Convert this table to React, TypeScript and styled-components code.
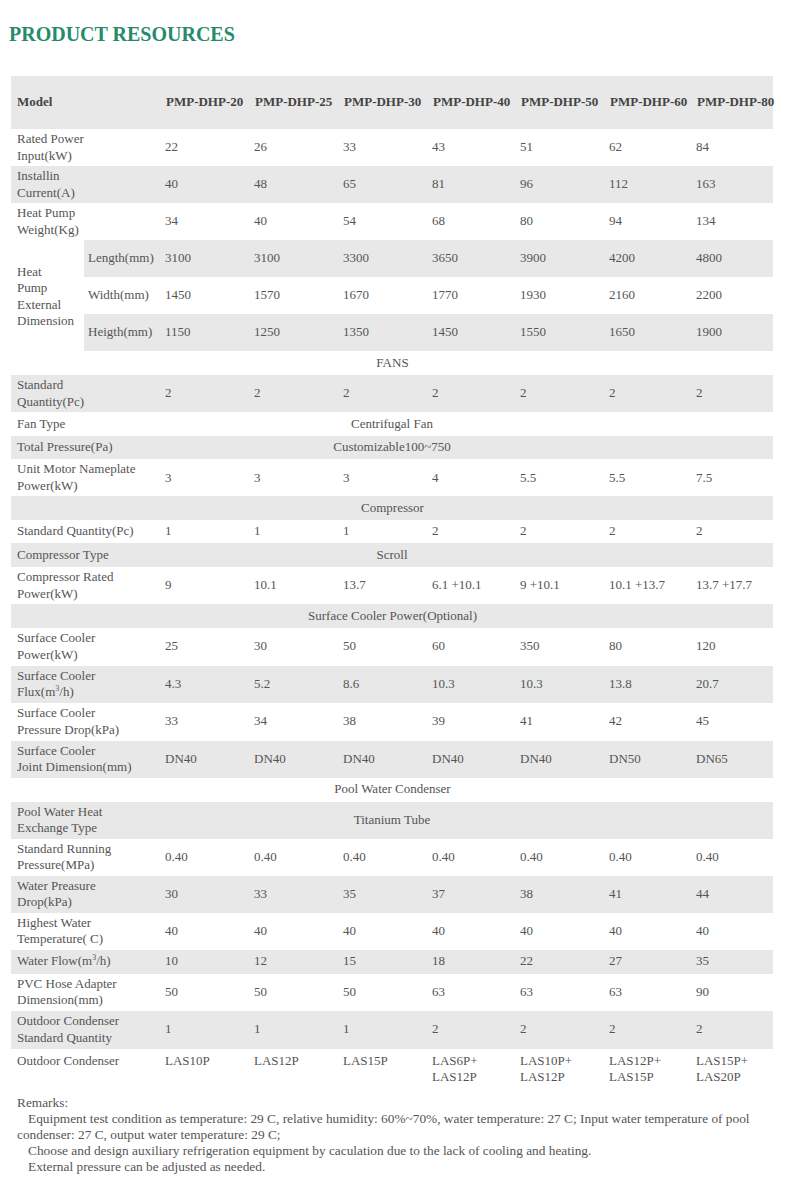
import React, { ReactNode } from 'react';
import styled, { createGlobalStyle } from 'styled-components';

const COLS = '73px 76px 89px 89px 89px 88px 89px 87px 82px';
const TALL = 37;
const SHORT = 23.4;

const GlobalStyle = createGlobalStyle`
  html, body {
    margin: 0;
    padding: 0;
    background: #ffffff;
  }
  body {
    font-family: "Liberation Serif", "Times New Roman", serif;
    color: #555555;
  }
`;

const Page = styled.div`
  width: 790px;
  padding: 23px 0 30px;
`;

const Title = styled.h2`
  margin: 0 0 30px 9px;
  font-size: 20px;
  line-height: 23px;
  font-weight: bold;
  color: #268b6c;
`;

const Table = styled.div`
  margin-left: 11px;
  width: 762px;
  display: grid;
  grid-template-columns: ${COLS};
  font-size: 13px;
  line-height: 16.5px;
  color: #555555;
`;

const Text = styled.span`
  white-space: pre-line;
`;

const HeadText = styled.span`
  white-space: nowrap;
`;

const Sup = styled.sup`
  font-size: 8px;
  line-height: 0;
  vertical-align: 5px;
`;

const Cell = styled.div<{ $shade?: boolean; $h?: number; $top?: boolean; $wide?: boolean }>`
  box-sizing: border-box;
  display: flex;
  align-items: ${p => (p.$top ? 'flex-start' : 'center')};
  min-height: ${p => p.$h ?? SHORT}px;
  padding: ${p => (p.$top ? '4px 4px 2px 5px' : '2px 4px 2px 5px')};
  background: ${p => (p.$shade ? '#e8e8e8' : 'transparent')};
  grid-column: ${p => (p.$wide ? '1 / 3' : 'auto')};
`;

const LabelCell = styled(Cell)`
  padding-left: 6px;
`;

const HeadCell = styled(Cell)`
  font-weight: bold;
  color: #444444;
  padding-left: 6px;
  padding-right: 0;
`;

const SubLabel = styled(Cell)`
  grid-column: 2;
  padding-left: 4px;
`;

const DimLabel = styled.div`
  grid-column: 1;
  grid-row: span 3;
  display: flex;
  align-items: center;
  padding: 2px 4px 0 6px;
`;

const SectionCell = styled(Cell)`
  grid-column: 1 / -1;
  justify-content: center;
`;

const SpanValue = styled(Cell)`
  grid-column: 3 / -1;
  justify-content: center;
  padding-right: 154px;
`;

const Remarks = styled.div`
  margin: 6px 0 0 17px;
  width: 760px;
  font-size: 13.33px;
  line-height: 16px;
  color: #555555;
`;

const RemarkTitle = styled.div``;

const Note = styled.p`
  margin: 0;
  text-indent: 11px;
`;

type DataRow = {
  kind: 'data';
  label: ReactNode;
  values: ReactNode[];
  shade: boolean;
  h?: number;
  top?: boolean;
};
type SpanRow = { kind: 'span'; label: ReactNode; value: string; shade: boolean; h?: number };
type SectionRow = { kind: 'section'; title: string; shade: boolean; h?: number };
type Row = DataRow | SpanRow | SectionRow;

const models = ['PMP-DHP-20', 'PMP-DHP-25', 'PMP-DHP-30', 'PMP-DHP-40', 'PMP-DHP-50', 'PMP-DHP-60', 'PMP-DHP-80'];

const topRows: DataRow[] = [
  { kind: 'data', label: 'Rated Power\nInput(kW)', values: ['22', '26', '33', '43', '51', '62', '84'], shade: false, h: TALL },
  { kind: 'data', label: 'Installin\nCurrent(A)', values: ['40', '48', '65', '81', '96', '112', '163'], shade: true, h: TALL },
  { kind: 'data', label: 'Heat Pump\nWeight(Kg)', values: ['34', '40', '54', '68', '80', '94', '134'], shade: false, h: TALL },
];

const dimRows: DataRow[] = [
  { kind: 'data', label: 'Length(mm)', values: ['3100', '3100', '3300', '3650', '3900', '4200', '4800'], shade: true, h: TALL },
  { kind: 'data', label: 'Width(mm)', values: ['1450', '1570', '1670', '1770', '1930', '2160', '2200'], shade: false, h: TALL },
  { kind: 'data', label: 'Heigth(mm)', values: ['1150', '1250', '1350', '1450', '1550', '1650', '1900'], shade: true, h: TALL },
];

const same = (v: string) => Array(7).fill(v);

const rows: Row[] = [
  { kind: 'section', title: 'FANS', shade: false, h: 24 },
  { kind: 'data', label: 'Standard\nQuantity(Pc)', values: same('2'), shade: true, h: TALL },
  { kind: 'span', label: 'Fan Type', value: 'Centrifugal Fan', shade: false, h: 24 },
  { kind: 'span', label: 'Total Pressure(Pa)', value: 'Customizable100~750', shade: true },
  { kind: 'data', label: 'Unit Motor Nameplate\nPower(kW)', values: ['3', '3', '3', '4', '5.5', '5.5', '7.5'], shade: false, h: TALL },
  { kind: 'section', title: 'Compressor', shade: true },
  { kind: 'data', label: 'Standard Quantity(Pc)', values: ['1', '1', '1', '2', '2', '2', '2'], shade: false },
  { kind: 'span', label: 'Compressor Type', value: 'Scroll', shade: true, h: 24 },
  {
    kind: 'data',
    label: 'Compressor Rated\nPower(kW)',
    values: ['9', '10.1', '13.7', '6.1 +10.1', '9 +10.1', '10.1 +13.7', '13.7 +17.7'],
    shade: false,
    h: TALL,
  },
  { kind: 'section', title: 'Surface Cooler Power(Optional)', shade: true },
  { kind: 'data', label: 'Surface Cooler\nPower(kW)', values: ['25', '30', '50', '60', '350', '80', '120'], shade: false, h: 38 },
  {
    kind: 'data',
    label: (
      <>
        {'Surface Cooler\nFlux(m'}
        <Sup>3</Sup>
        {'/h)'}
      </>
    ),
    values: ['4.3', '5.2', '8.6', '10.3', '10.3', '13.8', '20.7'],
    shade: true,
    h: TALL,
  },
  { kind: 'data', label: 'Surface Cooler\nPressure Drop(kPa)', values: ['33', '34', '38', '39', '41', '42', '45'], shade: false, h: 38 },
  {
    kind: 'data',
    label: 'Surface Cooler\nJoint Dimension(mm)',
    values: ['DN40', 'DN40', 'DN40', 'DN40', 'DN40', 'DN50', 'DN65'],
    shade: true,
    h: TALL,
  },
  { kind: 'section', title: 'Pool Water Condenser', shade: false, h: 24 },
  { kind: 'span', label: 'Pool Water Heat\nExchange Type', value: 'Titanium Tube', shade: true, h: TALL },
  { kind: 'data', label: 'Standard Running\nPressure(MPa)', values: same('0.40'), shade: false, h: TALL },
  { kind: 'data', label: 'Water Preasure\nDrop(kPa)', values: ['30', '33', '35', '37', '38', '41', '44'], shade: true, h: TALL },
  { kind: 'data', label: 'Highest Water\nTemperature( C)', values: same('40'), shade: false, h: 36 },
  {
    kind: 'data',
    label: (
      <>
        {'Water Flow(m'}
        <Sup>3</Sup>
        {'/h)'}
      </>
    ),
    values: ['10', '12', '15', '18', '22', '27', '35'],
    shade: true,
    h: 24,
  },
  { kind: 'data', label: 'PVC Hose Adapter\nDimension(mm)', values: ['50', '50', '50', '63', '63', '63', '90'], shade: false, h: TALL },
  {
    kind: 'data',
    label: 'Outdoor Condenser\nStandard Quantity',
    values: ['1', '1', '1', '2', '2', '2', '2'],
    shade: true,
    h: 38,
  },
  {
    kind: 'data',
    label: 'Outdoor Condenser',
    values: ['LAS10P', 'LAS12P', 'LAS15P', 'LAS6P+\nLAS12P', 'LAS10P+\nLAS12P', 'LAS12P+\nLAS15P', 'LAS15P+\nLAS20P'],
    shade: false,
    h: 40,
    top: true,
  },
];

const renderRow = (row: Row, i: number) => {
  if (row.kind === 'section') {
    return (
      <SectionCell key={i} $shade={row.shade} $h={row.h}>
        <Text>{row.title}</Text>
      </SectionCell>
    );
  }
  if (row.kind === 'span') {
    return (
      <React.Fragment key={i}>
        <LabelCell $shade={row.shade} $h={row.h} $wide>
          <Text>{row.label}</Text>
        </LabelCell>
        <SpanValue $shade={row.shade} $h={row.h}>
          <Text>{row.value}</Text>
        </SpanValue>
      </React.Fragment>
    );
  }
  return (
    <React.Fragment key={i}>
      <LabelCell $shade={row.shade} $h={row.h} $top={row.top} $wide>
        <Text>{row.label}</Text>
      </LabelCell>
      {row.values.map((v, j) => (
        <Cell key={j} $shade={row.shade} $h={row.h} $top={row.top}>
          <Text>{v}</Text>
        </Cell>
      ))}
    </React.Fragment>
  );
};

const App = () => (
  <Page>
    <GlobalStyle />
    <Title>PRODUCT RESOURCES</Title>
    <Table>
      <HeadCell $shade $h={53} $wide>
        <HeadText>Model</HeadText>
      </HeadCell>
      {models.map(m => (
        <HeadCell key={m} $shade $h={53}>
          <HeadText>{m}</HeadText>
        </HeadCell>
      ))}

      {topRows.map((r, i) => renderRow(r, i))}

      <DimLabel>
        <Text>{'Heat\nPump\nExternal\nDimension'}</Text>
      </DimLabel>
      {dimRows.map((r, i) => (
        <React.Fragment key={i}>
          <SubLabel $shade={r.shade} $h={r.h}>
            <Text>{r.label}</Text>
          </SubLabel>
          {r.values.map((v, j) => (
            <Cell key={j} $shade={r.shade} $h={r.h}>
              <Text>{v}</Text>
            </Cell>
          ))}
        </React.Fragment>
      ))}

      {rows.map((r, i) => renderRow(r, i + 10))}
    </Table>

    <Remarks>
      <RemarkTitle>Remarks:</RemarkTitle>
      <Note>
        Equipment test condition as temperature: 29 C, relative humidity: 60%~70%, water temperature: 27 C; Input water
        temperature of pool condenser: 27 C, output water temperature: 29 C;
      </Note>
      <Note>Choose and design auxiliary refrigeration equipment by caculation due to the lack of cooling and heating.</Note>
      <Note>External pressure can be adjusted as needed.</Note>
    </Remarks>
  </Page>
);

export default App;
